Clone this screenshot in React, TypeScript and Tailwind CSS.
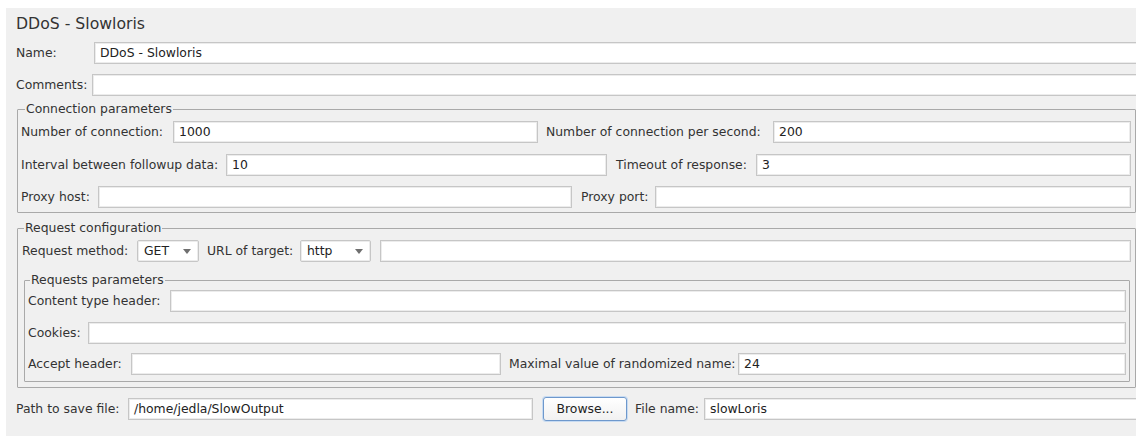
import React from "react";

const font = { fontFamily: '"DejaVu Sans", "Liberation Sans", sans-serif' };

function Field({ value = "", className = "" }: { value?: string; className?: string }) {
  return (
    <div
      className={
        "h-[22px] bg-white border border-[#c6c6c6] shadow-[inset_0_0_0_1px_#ececec] flex items-center pl-[5px] text-[12.4px] text-[#222] whitespace-nowrap overflow-hidden " +
        className
      }
    >
      {value}
    </div>
  );
}

function Label({ text, className = "" }: { text: string; className?: string }) {
  return <div className={"shrink-0 text-[12.4px] text-[#333] whitespace-nowrap " + className}>{text}</div>;
}

function Combo({ value, className = "" }: { value: string; className?: string }) {
  return (
    <div
      className={
        "h-[22px] shrink-0 bg-white border border-[#c6c6c6] shadow-[inset_0_0_0_1px_#ececec] rounded-[2px] flex items-center justify-between pl-[6px] pr-[7px] text-[12.4px] text-[#222] " +
        className
      }
    >
      <span>{value}</span>
      <svg width="8" height="5" viewBox="0 0 8 5">
        <path d="M0 0 H8 L4 5 Z" fill="#6f6f6f" />
      </svg>
    </div>
  );
}

function Group({
  title,
  className = "",
  legendClass = "ml-[3px]",
  children,
}: {
  title: string;
  className?: string;
  legendClass?: string;
  children: React.ReactNode;
}) {
  return (
    <fieldset className={"border border-[#a9a9a9] rounded-[1px] " + className}>
      <legend className={"px-px text-[12.4px] leading-[14px] text-[#333] " + legendClass}>{title}</legend>
      {children}
    </fieldset>
  );
}

export default function App() {
  return (
    <div className="w-[1136px] h-[437px] bg-white overflow-hidden pt-[8px] pl-[6px]" style={font}>
      <div className="bg-[#f0f0f0] w-[1140px] pl-[10px] pb-[15px]">
        {/* title */}
        <div className="h-[30px] flex items-center pt-px text-[15.7px] text-[#333]">DDoS - Slowloris</div>

        {/* name / comments */}
        <div className="flex items-center mt-[4px]">
          <Label text="Name:" className="w-[78px]" />
          <Field value="DDoS - Slowloris" className="flex-1" />
        </div>
        <div className="flex items-center mt-[10px]">
          <Label text="Comments:" className="w-[76px]" />
          <Field className="flex-1" />
        </div>

        {/* connection parameters */}
        <Group
          title="Connection parameters"
          legendClass="ml-[4px]"
          className="mt-[6px] ml-[1px] mr-[10px] pl-[3px] pr-[4px] pb-[4px]"
        >
          <div className="flex items-center mt-[5px]">
            <Label text="Number of connection:" className="w-[152px]" />
            <Field value="1000" className="w-[365px]" />
            <Label text="Number of connection per second:" className="w-[227px] pl-[8px] box-content" />
            <Field value="200" className="flex-1" />
          </div>
          <div className="flex items-center mt-[11px]">
            <Label text="Interval between followup data:" className="w-[205px]" />
            <Field value="10" className="w-[381px]" />
            <Label text="Timeout of response:" className="w-[140px] pl-[9px] box-content" />
            <Field value="3" className="flex-1" />
          </div>
          <div className="flex items-center mt-[10px]">
            <Label text="Proxy host:" className="w-[77px]" />
            <Field className="w-[474px]" />
            <Label text="Proxy port:" className="w-[74px] pl-[9px] box-content" />
            <Field className="flex-1" />
          </div>
        </Group>

        {/* request configuration */}
        <Group
          title="Request configuration"
          legendClass="ml-[2px]"
          className="mt-[8px] ml-[1px] mr-[10px] pl-[4px] pr-[4px] pb-[5px]"
        >
          <div className="flex items-center mt-[5px]">
            <Label text="Request method:" className="w-[115px]" />
            <Combo value="GET" className="w-[62px]" />
            <Label text="URL of target:" className="w-[93px] pl-[8px] box-content" />
            <Combo value="http" className="w-[71px]" />
            <Field className="flex-1 ml-[9px]" />
          </div>

          <Group
            title="Requests parameters"
            legendClass="ml-[2px]"
            className="mt-[11px] ml-[2px] mr-[1px] pl-[3px] pr-[3px] pb-[6px]"
          >
            <div className="flex items-center mt-[3px]">
              <Label text="Content type header:" className="w-[142px]" />
              <Field className="flex-1" />
            </div>
            <div className="flex items-center mt-[10px]">
              <Label text="Cookies:" className="w-[60px]" />
              <Field className="flex-1" />
            </div>
            <div className="flex items-center mt-[9px]">
              <Label text="Accept header:" className="w-[103px]" />
              <Field className="w-[370px]" />
              <Label text="Maximal value of randomized name:" className="w-[229px] pl-[8px] box-content" />
              <Field value="24" className="flex-1" />
            </div>
          </Group>
        </Group>

        {/* output file */}
        <div className="flex items-center mt-[9px]">
          <Label text="Path to save file:" className="w-[112px]" />
          <Field value="/home/jedla/SlowOutput" className="w-[405px]" />
          <button
            type="button"
            className="ml-[10px] w-[84px] h-[24px] shrink-0 rounded-[3px] border border-[#6e98cc] bg-gradient-to-b from-white to-[#f1f1f1] shadow-[0_0_0_1px_#c7dbf2] text-[12.4px] text-[#222]"
          >
            Browse...
          </button>
          <Label text="File name:" className="w-[69px] pl-[8px] box-content" />
          <Field value="slowLoris" className="flex-1" />
        </div>
      </div>
    </div>
  );
}
